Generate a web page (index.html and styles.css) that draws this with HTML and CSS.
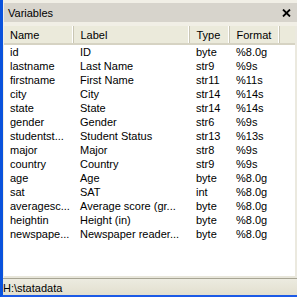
FILE: index.html
```html
<!DOCTYPE html>
<html lang="en">

<head>
    <meta charset="UTF-8">
    <title>Variables</title>
    <link rel="stylesheet" href="styles.css">
</head>

<body>
    <div class="window">
        <div class="titlebar">
            <span class="title">Variables</span>
            <svg class="close" width="9" height="8" viewBox="0 0 9 8">
                <path d="M1 0.5 L8 7.5 M8 0.5 L1 7.5" stroke="#000" stroke-width="1.8" fill="none" />
            </svg>
        </div>
        <div class="list">
            <table class="vars">
                <colgroup>
                    <col class="c-name">
                    <col class="c-label">
                    <col class="c-type">
                    <col class="c-format">
                    <col>
                </colgroup>
                <thead>
                    <tr>
                        <th>Name</th>
                        <th>Label</th>
                        <th>Type</th>
                        <th>Format</th>
                        <th class="filler"></th>
                    </tr>
                </thead>
                <tbody>
                    <tr><td>id</td><td>ID</td><td>byte</td><td>%8.0g</td><td></td></tr>
                    <tr><td>lastname</td><td>Last Name</td><td>str9</td><td>%9s</td><td></td></tr>
                    <tr><td>firstname</td><td>First Name</td><td>str11</td><td>%11s</td><td></td></tr>
                    <tr><td>city</td><td>City</td><td>str14</td><td>%14s</td><td></td></tr>
                    <tr><td>state</td><td>State</td><td>str14</td><td>%14s</td><td></td></tr>
                    <tr><td>gender</td><td>Gender</td><td>str6</td><td>%9s</td><td></td></tr>
                    <tr><td>studentst...</td><td>Student Status</td><td>str13</td><td>%13s</td><td></td></tr>
                    <tr><td>major</td><td>Major</td><td>str8</td><td>%9s</td><td></td></tr>
                    <tr><td>country</td><td>Country</td><td>str9</td><td>%9s</td><td></td></tr>
                    <tr><td>age</td><td>Age</td><td>byte</td><td>%8.0g</td><td></td></tr>
                    <tr><td>sat</td><td>SAT</td><td>int</td><td>%8.0g</td><td></td></tr>
                    <tr><td>averagesc...</td><td>Average score (gr...</td><td>byte</td><td>%8.0g</td><td></td></tr>
                    <tr><td>heightin</td><td>Height (in)</td><td>byte</td><td>%8.0g</td><td></td></tr>
                    <tr><td>newspape...</td><td>Newspaper reader...</td><td>byte</td><td>%8.0g</td><td></td></tr>
                </tbody>
            </table>
        </div>
        <div class="status">H:\statadata</div>
    </div>
</body>

</html>
```

FILE: styles.css
```css
* {
    margin: 0;
    padding: 0;
    box-sizing: border-box;
}

body {
    width: 297px;
    height: 297px;
    overflow: hidden;
    background: #ece9d8;
    font-family: 'Liberation Sans', Arial, sans-serif;
    font-size: 11px;
    color: #000;
}

.window {
    height: 297px;
    display: flex;
    flex-direction: column;
    border-left: 3px solid #0a52dc;
    border-bottom: 2px solid #1c5ae6;
    padding-top: 3px;
    background: #f1efe6;
}

.titlebar {
    height: 19px;
    display: flex;
    align-items: center;
    justify-content: space-between;
    padding: 0 6px 0 4px;
    margin-left: 1px;
    background: #d7d4cc;
}

.title {
    font-size: 11px;
}

.close {
    display: block;
    margin-top: 1px;
}

.list {
    flex: 1;
    margin: 4px 0 0 1px;
    background: #fff;
    border-right: 2px solid #ebe9df;
    border-bottom: 2px solid #e8e6da;
    overflow: hidden;
}

.vars {
    width: 100%;
    border-collapse: collapse;
    table-layout: fixed;
}

.c-name {
    width: 69px;
}

.c-label {
    width: 116px;
}

.c-type {
    width: 40px;
}

.c-format {
    width: 50px;
}

th {
    height: 18px;
    padding: 1px 0 0 7px;
    font-weight: normal;
    text-align: left;
    background: #ebeadb;
    border-bottom: 2px solid #d6d3c3;
    border-right: 1px solid #c9c6b4;
    box-shadow: inset -1px 0 0 #fff;
}

th:first-child {
    padding-left: 6px;
}

th.filler {
    border-right: none;
    box-shadow: none;
}

td {
    height: 14px;
    padding: 0 0 0 7px;
    white-space: nowrap;
    overflow: hidden;
    line-height: 14px;
}

tbody tr:first-child td {
    padding-top: 0;
}

td:first-child {
    padding-left: 6px;
}

.status {
    height: 17px;
    padding: 1px 0 0 0;
    line-height: 16px;
    border-top: 1px solid #a7a594;
    background: linear-gradient(#ecebe0, #e2dfcf);
}
```
